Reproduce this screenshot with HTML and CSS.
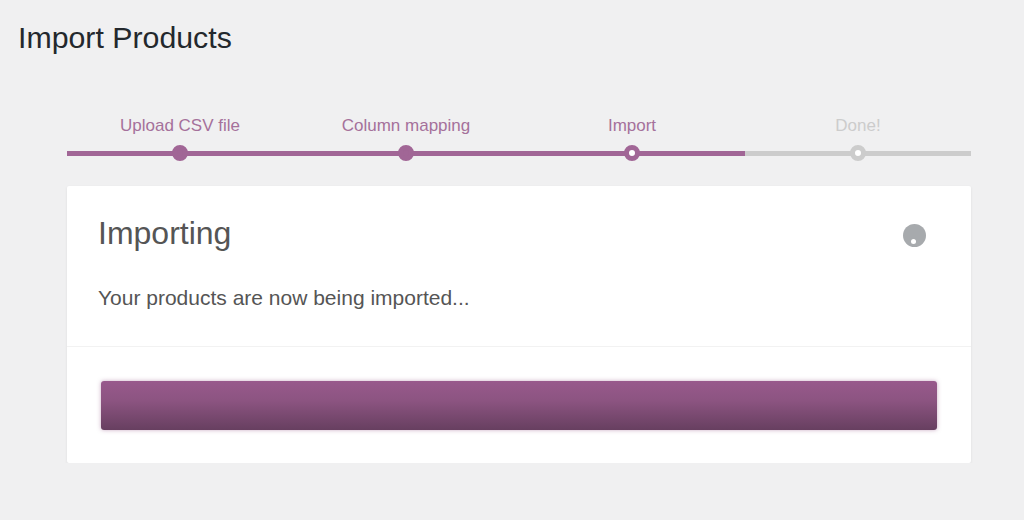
FILE: index.html
```html
<!DOCTYPE html>
<html lang="en">
<head>
    <meta charset="UTF-8">
    <meta name="viewport" content="width=device-width, initial-scale=1.0">
    <title>Import Products</title>
    <link rel="stylesheet" href="styles.css">
</head>
<body>
    <h1 class="page-title">Import Products</h1>

    <div class="wrap">
        <ol class="steps">
            <li class="step done">Upload CSV file</li>
            <li class="step done">Column mapping</li>
            <li class="step active">Import</li>
            <li class="step">Done!</li>
        </ol>

        <div class="card">
            <header class="card-head">
                <div class="card-title-row">
                    <h2>Importing</h2>
                    <span class="spinner"></span>
                </div>
                <p>Your products are now being imported...</p>
            </header>
            <section class="card-body">
                <div class="progress"></div>
            </section>
        </div>
    </div>
</body>
</html>
```

FILE: styles.css
```css
*,
*::after {
    box-sizing: border-box;
}
body {
    font-family: "Liberation Sans", Arial, sans-serif;
    margin: 0;
    background-color: #f0f0f1;
    color: #555;
}
.page-title {
    margin: 0;
    padding: 21px 0 0 18px;
    font-size: 30.3px;
    line-height: 34px;
    font-weight: 400;
    color: #23282d;
}
.wrap {
    width: 904px;
    margin: 0 0 0 67px;
    padding-top: 58px;
}
.steps {
    display: flex;
    list-style: none;
    margin: 0;
    padding: 0;
}
.step {
    position: relative;
    flex: 1;
    height: 43px;
    padding-top: 3px;
    border-bottom: 5px solid #ccc;
    margin-bottom: 30px;
    text-align: center;
    font-size: 17px;
    line-height: 20px;
    color: #ccc;
}
.step.done,
.step.active {
    color: #a5719b;
    border-bottom-color: #a16696;
}
/* step dot sits over the line */
.step::after {
    content: "";
    position: absolute;
    left: 50%;
    bottom: -10px;
    width: 16px;
    height: 16px;
    margin-left: -8px;
    border-radius: 50%;
    background-color: #fff;
    border: 5px solid #ccc;
}
.step.active::after {
    border-color: #a16696;
}
.step.done::after {
    background-color: #a16696;
    border-color: #a16696;
}
.card {
    background-color: #fff;
    border-radius: 2px;
    box-shadow: 0 1px 3px rgba(0, 0, 0, 0.08);
}
.card-head {
    padding: 28px 31px 0;
    border-bottom: 1px solid #f2f2f2;
    height: 161px;
}
.card-title-row {
    display: flex;
    justify-content: space-between;
    align-items: center;
    padding-right: 14px;
}
.card-head h2 {
    margin: 0;
    font-size: 32px;
    line-height: 38px;
    font-weight: 400;
    color: #555;
}
.card-head p {
    margin: 34px 0 0;
    font-size: 21px;
    line-height: 24px;
    color: #555;
}
.spinner {
    position: relative;
    width: 23px;
    height: 23px;
    margin-top: 5px;
    border-radius: 50%;
    background-color: #a7aaad;
}
.spinner::after {
    content: "";
    position: absolute;
    left: 8px;
    bottom: 3px;
    width: 5px;
    height: 5px;
    border-radius: 50%;
    background-color: #fff;
}
.card-body {
    padding: 34px 34px 33px;
}
.progress {
    height: 49px;
    border-radius: 3px;
    background: linear-gradient(to bottom, #98598c, #8c5481 40%, #673f60);
    box-shadow: 0 0 4px rgba(150, 88, 136, 0.5);
}
```
